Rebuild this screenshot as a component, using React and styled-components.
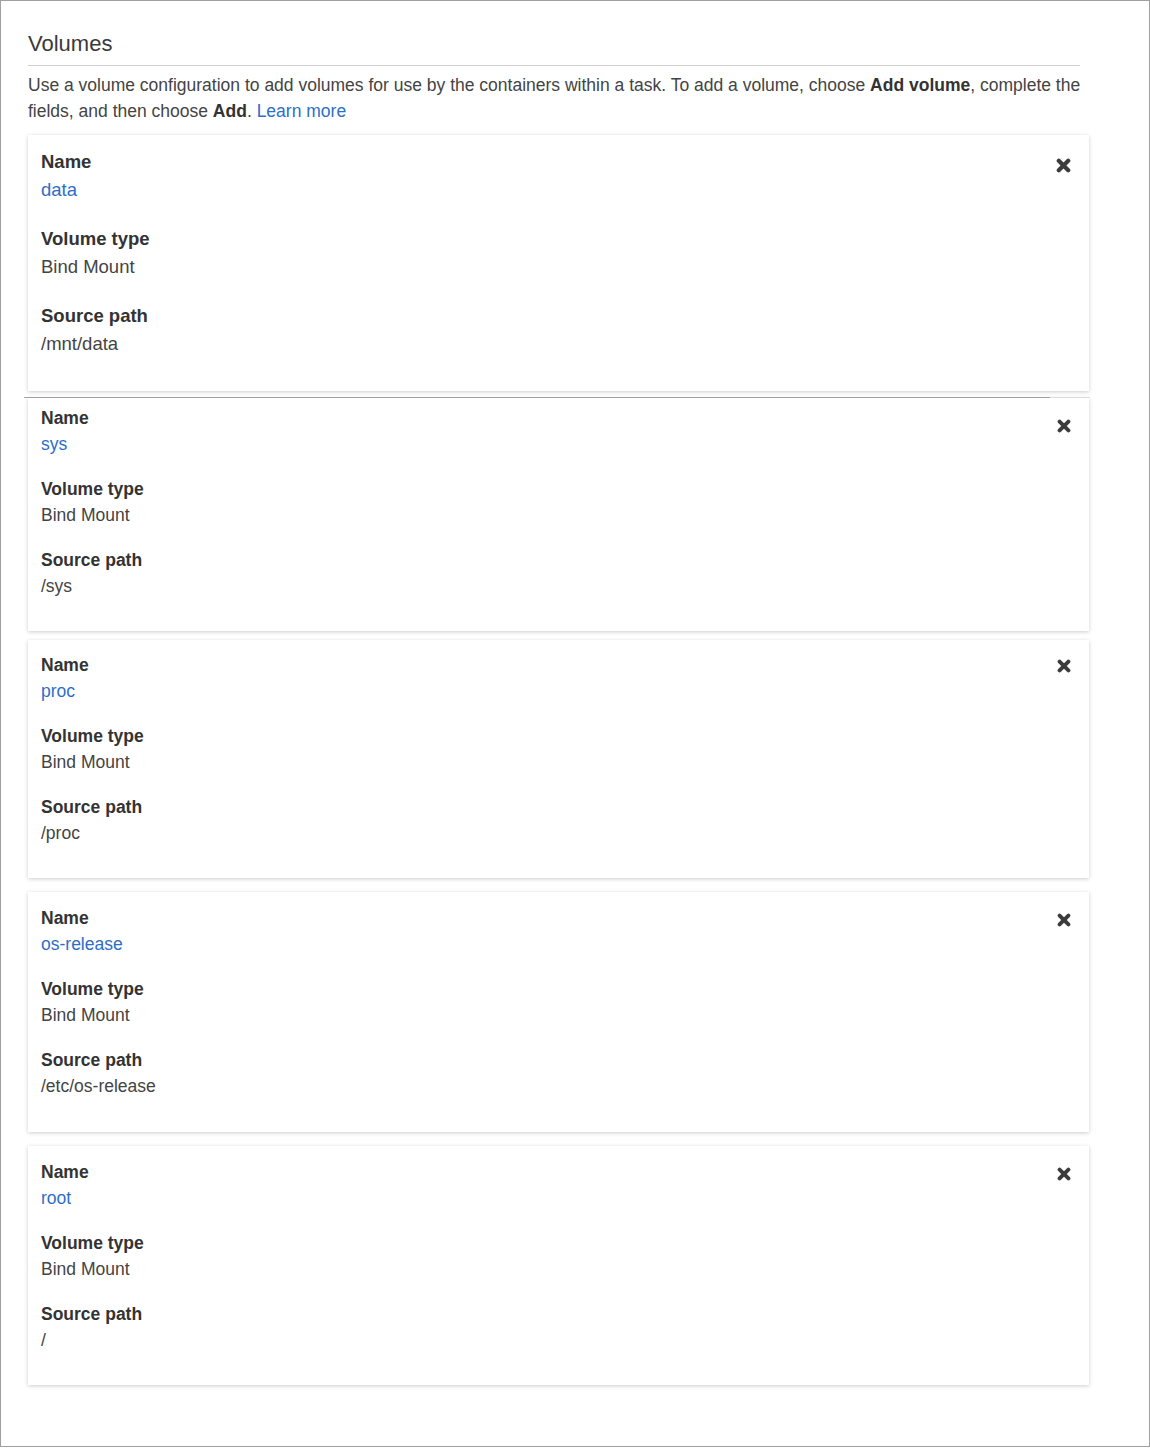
import React from "react";
import styled, { createGlobalStyle } from "styled-components";

const GlobalStyle = createGlobalStyle`
  body {
    margin: 0;
    background: #fff;
    font-family: "Liberation Sans", Arial, sans-serif;
    color: #333;
  }
`;

const Frame = styled.div`
  box-sizing: border-box;
  width: 1150px;
  height: 1447px;
  border: 1px solid #a0a0a0;
  padding: 30px 60px 0 27px;
`;

const Header = styled.div`
  width: 1052px;
`;

const Title = styled.h2`
  margin: 0;
  padding-bottom: 8px;
  border-bottom: 1px solid #cfcfcf;
  font-size: 22px;
  line-height: 26px;
  font-weight: normal;
  color: #3a3a3a;
`;

const Intro = styled.p`
  margin: 6px -12px 11px 0;
  font-size: 17.5px;
  line-height: 26px;
  color: #444;
  b {
    color: #333;
  }
  a {
    color: #2d6ec9;
    text-decoration: none;
  }
`;

const Card = styled.div`
  box-sizing: border-box;
  width: 1061px;
  height: ${(p) => p.$height}px;
  display: flex;
  justify-content: space-between;
  align-items: flex-start;
  padding: ${(p) => p.$top}px 18px 0 13px;
  margin-bottom: ${(p) => p.$gap}px;
  background: #fff;
  box-shadow: 0 1px 4px rgba(0, 0, 0, 0.2);
`;

const Fields = styled.dl`
  margin: 0;
  font-size: ${(p) => (p.$large ? 18.5 : 17.5)}px;
  line-height: ${(p) => (p.$large ? 28 : 26)}px;
`;

const Label = styled.dt`
  font-weight: bold;
  color: #333;
`;

const Value = styled.dd`
  margin: 0 0 ${(p) => (p.$large ? 21 : 19)}px;
  color: ${(p) => (p.$link ? "#2d6ec9" : "#444")};
  &:last-child {
    margin-bottom: 0;
  }
`;

const Close = styled.button`
  border: 0;
  padding: 0;
  background: none;
  margin-top: ${(p) => p.$offset}px;
  width: ${(p) => p.$size}px;
  height: ${(p) => p.$size}px;
  display: flex;
  cursor: pointer;
`;

const Seam = styled.div`
  width: 1066px;
  height: 1px;
  margin: 6px 0 0 -4px;
  background: linear-gradient(90deg, #a8a8a8 0, #a8a8a8 1026px, #e6e6e6 1026px);
`;

const volumes = [
  { name: "data", path: "/mnt/data" },
  { name: "sys", path: "/sys" },
  { name: "proc", path: "/proc" },
  { name: "os-release", path: "/etc/os-release" },
  { name: "root", path: "/" },
];

const layouts = [
  { height: 256, top: 13, gap: 0, close: 10, size: 15, large: true },
  { height: 233, top: 7, gap: 9, close: 14, size: 14 },
  { height: 238, top: 12, gap: 14, close: 7, size: 14 },
  { height: 240, top: 13, gap: 14, close: 8, size: 14 },
  { height: 239, top: 13, gap: 0, close: 8, size: 14 },
];

function TimesIcon({ size }) {
  return (
    <svg width={size} height={size} viewBox="0 0 14 14">
      <path
        d="M2.6 2.6 L11.4 11.4 M11.4 2.6 L2.6 11.4"
        stroke="#3c3c3c"
        strokeWidth="3.9"
        strokeLinecap="round"
      />
    </svg>
  );
}

function VolumeCard({ volume, layout }) {
  const large = layout.large;
  return (
    <Card $height={layout.height} $top={layout.top} $gap={layout.gap}>
      <Fields $large={large}>
        <Label>Name</Label>
        <Value $large={large} $link>
          {volume.name}
        </Value>
        <Label>Volume type</Label>
        <Value $large={large}>Bind Mount</Value>
        <Label>Source path</Label>
        <Value $large={large}>{volume.path}</Value>
      </Fields>
      <Close $offset={layout.close} $size={layout.size} aria-label="Remove volume">
        <TimesIcon size={layout.size} />
      </Close>
    </Card>
  );
}

export default function App() {
  return (
    <>
      <GlobalStyle />
      <Frame>
        <Header>
          <Title>Volumes</Title>
          <Intro>
            Use a volume configuration to add volumes for use by the containers
            within a task. To add a volume, choose <b>Add volume</b>, complete
            the fields, and then choose <b>Add</b>. <a href="#">Learn more</a>
          </Intro>
        </Header>
        <VolumeCard volume={volumes[0]} layout={layouts[0]} />
        <Seam />
        {volumes.slice(1).map((v, i) => (
          <VolumeCard key={v.name} volume={v} layout={layouts[i + 1]} />
        ))}
      </Frame>
    </>
  );
}
